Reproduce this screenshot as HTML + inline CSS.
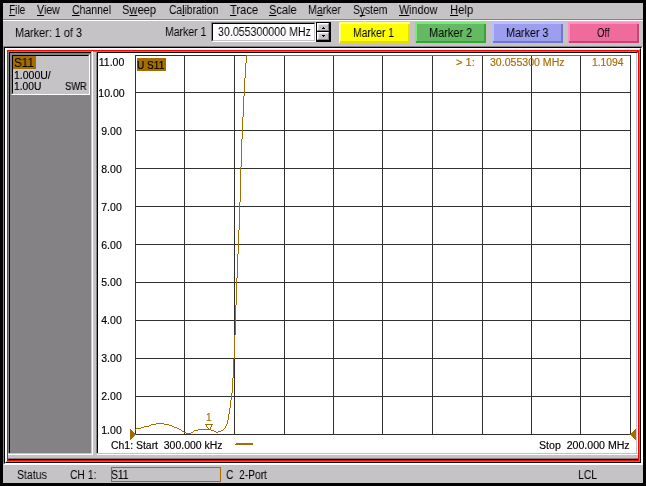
<!DOCTYPE html>
<html><head><meta charset="utf-8"><title>Network Analyzer</title>
<style>
html,body{margin:0;padding:0;background:#000;}
body{width:646px;height:486px;position:relative;overflow:hidden;font-family:"Liberation Sans",sans-serif;font-size:12.5px;color:#000;}
div,span{box-sizing:border-box;}
.a{position:absolute;}
.t{position:absolute;white-space:nowrap;line-height:13px;height:13px;transform-origin:0 0;will-change:transform;}
.ms{font-size:12.5px;}
.pl{font-size:10px;-webkit-text-stroke:0.15px;}
u{text-decoration:underline;text-decoration-thickness:1px;text-underline-offset:1px;text-decoration-skip-ink:none;}
.g{color:#a56d00;}
.yl{left:97.5px;width:27px;text-align:center;font-size:10px;-webkit-text-stroke:0.15px;transform:scaleX(1.05);transform-origin:50% 0;}
.btn{position:absolute;top:22px;width:71px;height:21px;}
svg{position:absolute;left:0;top:0;}
</style></head><body>
<div class="a" style="left:3px;top:3px;width:640px;height:480px;background:#c6c3c6"></div>
<!-- menu -->
<div class="t ms" style="left:9.05px;top:4px;transform:scaleX(0.8053)"><u>F</u>ile</div>
<div class="t ms" style="left:37.40px;top:4px;transform:scaleX(0.8519)"><u>V</u>iew</div>
<div class="t ms" style="left:72.20px;top:4px;transform:scaleX(0.8391)"><u>C</u>hannel</div>
<div class="t ms" style="left:122.40px;top:4px;transform:scaleX(0.8919)">S<u>w</u>eep</div>
<div class="t ms" style="left:168.95px;top:4px;transform:scaleX(0.8254)">Ca<u>l</u>ibration</div>
<div class="t ms" style="left:229.55px;top:4px;transform:scaleX(0.8935)"><u>T</u>race</div>
<div class="t ms" style="left:269.10px;top:4px;transform:scaleX(0.8867)"><u>S</u>cale</div>
<div class="t ms" style="left:308.15px;top:4px;transform:scaleX(0.8447)">M<u>a</u>rker</div>
<div class="t ms" style="left:353.40px;top:4px;transform:scaleX(0.8250)">S<u>y</u>stem</div>
<div class="t ms" style="left:399.35px;top:4px;transform:scaleX(0.8644)"><u>W</u>indow</div>
<div class="t ms" style="left:449.65px;top:4px;transform:scaleX(0.9009)"><u>H</u>elp</div>
<div class="a" style="left:3px;top:19px;width:640px;height:1px;background:#848284"></div>
<div class="a" style="left:3px;top:20px;width:640px;height:1px;background:#fff"></div>
<!-- toolbar -->
<div class="t ms" style="left:14.60px;top:27px;transform:scaleX(0.8684)">Marker: 1 of 3</div>
<div class="t ms" style="left:164.55px;top:26px;transform:scaleX(0.8396)">Marker 1</div>
<div class="a" style="left:211px;top:22px;width:105px;height:20px;background:#fff;border:1px solid;border-color:#848284 #fff #fff #848284"></div>
<div class="a" style="left:212px;top:23px;width:103px;height:18px;border:1px solid;border-color:#000 #c6c3c6 #c6c3c6 #000"></div>
<div class="t ms" style="left:217.95px;top:26px;transform:scaleX(0.8523)">30.055300000 MHz</div>
<div class="a" style="left:316px;top:22px;width:15px;height:20px;background:#000"></div>
<div class="a" style="left:317px;top:23px;width:12px;height:8px;background:#c6c3c6;border:1px solid;border-color:#fff #848284 #848284 #fff"></div><div class="a" style="left:318px;top:24px;width:10px;height:6px;border:1px solid;border-color:#e3e3e3 #c6c3c6 #c6c3c6 #e3e3e3"></div>
<div class="a" style="left:317px;top:32px;width:12px;height:8px;background:#c6c3c6;border:1px solid;border-color:#fff #848284 #848284 #fff"></div><div class="a" style="left:318px;top:33px;width:10px;height:6px;border:1px solid;border-color:#e3e3e3 #c6c3c6 #c6c3c6 #e3e3e3"></div>
<div class="a" style="left:323px;top:27px;width:1px;height:1px;background:#000"></div>
<div class="a" style="left:322px;top:28px;width:3px;height:1px;background:#000"></div>
<div class="a" style="left:322px;top:35px;width:3px;height:1px;background:#000"></div>
<div class="a" style="left:323px;top:36px;width:1px;height:1px;background:#000"></div>
<div class="btn" style="left:339px;background:#ffff84"><div class="a" style="left:2px;top:2px;width:67px;height:17px;background:#ffff00"></div><div class="a" style="left:69px;top:2px;width:2px;height:19px;background:#e7db00"></div><div class="a" style="left:1px;top:19px;width:70px;height:2px;background:#e7db00"></div></div><div class="t ms" style="left:353.40px;top:27px;transform:scaleX(0.8333)">Marker 1</div>
<div class="btn" style="left:415px;background:#7be77b"><div class="a" style="left:2px;top:2px;width:67px;height:17px;background:#63ba63"></div><div class="a" style="left:69px;top:2px;width:2px;height:19px;background:#39a239"></div><div class="a" style="left:1px;top:19px;width:70px;height:2px;background:#39a239"></div></div><div class="t ms" style="left:428.65px;top:27px;transform:scaleX(0.8771)">Marker 2</div>
<div class="btn" style="left:492px;background:#bdbeff"><div class="a" style="left:2px;top:2px;width:67px;height:17px;background:#9c9eef"></div><div class="a" style="left:69px;top:2px;width:2px;height:19px;background:#7375c6"></div><div class="a" style="left:1px;top:19px;width:70px;height:2px;background:#7375c6"></div></div><div class="t ms" style="left:506.00px;top:27px;transform:scaleX(0.8625)">Marker 3</div>
<div class="btn" style="left:568px;background:#ff8ec6"><div class="a" style="left:2px;top:2px;width:67px;height:17px;background:#ef6b9c"></div><div class="a" style="left:69px;top:2px;width:2px;height:19px;background:#c64573"></div><div class="a" style="left:1px;top:19px;width:70px;height:2px;background:#c64573"></div></div><div class="t ms" style="left:597.00px;top:27px;transform:scaleX(0.7647)">Off</div>
<!-- frame -->
<div class="a" style="left:3px;top:46px;width:640px;height:419px;background:#fff;border:1px solid;border-color:#848284 #fff #fff #848284"></div>
<div class="a" style="left:4px;top:47px;width:638px;height:417px;background:#fff;border:1px solid;border-color:#000 #fff #fff #000"></div>
<div class="a" style="left:5px;top:48px;width:636px;height:415px;background:#000;border:1px solid;border-color:#fff #000 #000 #fff"></div>
<div class="a" style="left:6px;top:49px;width:634px;height:413px;background:#000;border:1px solid;border-color:#fff #848284 #848284 #fff"></div>
<div class="a" style="left:7px;top:50px;width:632px;height:411px;background:#000;border:1px solid #f00"></div>
<div class="a" style="left:8px;top:51px;width:630px;height:409px;background:#000;border:1px solid;border-color:#848284 #000 #000 #848284"></div>
<!-- left panel -->
<div class="a" style="left:10px;top:53px;width:81px;height:400px;background:#848284"></div>
<div class="a" style="left:8px;top:453px;width:630px;height:1px;background:#c6c3c6"></div>
<div class="a" style="left:8px;top:454px;width:630px;height:1px;background:#fff"></div>
<div class="a" style="left:8px;top:455px;width:630px;height:3px;background:#c6c3c6"></div>
<div class="a" style="left:8px;top:458px;width:630px;height:1px;background:#848284"></div>
<div class="a" style="left:91px;top:52px;width:1px;height:402px;background:#c6c3c6"></div>
<div class="a" style="left:92px;top:51px;width:1px;height:404px;background:#fff"></div>
<div class="a" style="left:93px;top:52px;width:3px;height:406px;background:#c6c3c6"></div>
<div class="a" style="left:96px;top:52px;width:1px;height:401px;background:#848284"></div>
<div class="a" style="left:96px;top:453px;width:1px;height:5px;background:#c6c3c6"></div>
<div class="a" style="left:11px;top:54px;width:79px;height:41px;background:#c6c3c6;border:1px solid;border-color:#848284 #fff #fff #848284"></div>
<div class="a" style="left:12px;top:55px;width:77px;height:39px;border:1px solid;border-color:#000 #c6c3c6 #c6c3c6 #000"></div>
<div class="a" style="left:13px;top:56px;width:23px;height:13px;background:#a56d00"></div>
<div class="t ms" style="left:13.62px;top:57px;transform:scaleX(0.9375)">S11</div>
<div class="t pl" style="left:14.05px;top:69px;transform:scaleX(1.0474)">1.000U/</div>
<div class="t pl" style="left:14.05px;top:80px;transform:scaleX(1.0247)">1.00U</div>
<div class="t pl" style="left:65.20px;top:80px;transform:scaleX(0.9304)">SWR</div>
<!-- plot panel -->
<div class="a" style="left:97px;top:52px;width:541px;height:401px;background:#fff;border:1px solid;border-color:#000 #fff #fff #000;border-bottom:none"></div>
<div class="a" style="left:636px;top:53px;width:1px;height:400px;background:#c6c3c6"></div>
<svg width="646" height="486" viewBox="0 0 646 486" shape-rendering="crispEdges">
<g fill="#313031"><rect x="135" y="55" width="1" height="380"/><rect x="184" y="55" width="1" height="380"/><rect x="234" y="55" width="1" height="380"/><rect x="284" y="55" width="1" height="380"/><rect x="333" y="55" width="1" height="380"/><rect x="382" y="55" width="1" height="380"/><rect x="432" y="55" width="1" height="380"/><rect x="482" y="55" width="1" height="380"/><rect x="531" y="55" width="1" height="380"/><rect x="580" y="55" width="1" height="380"/><rect x="630" y="55" width="1" height="380"/><rect x="135" y="55" width="496" height="1"/><rect x="135" y="92" width="496" height="1"/><rect x="135" y="130" width="496" height="1"/><rect x="135" y="168" width="496" height="1"/><rect x="135" y="206" width="496" height="1"/><rect x="135" y="244" width="496" height="1"/><rect x="135" y="282" width="496" height="1"/><rect x="135" y="320" width="496" height="1"/><rect x="135" y="358" width="496" height="1"/><rect x="135" y="396" width="496" height="1"/><rect x="135" y="434" width="496" height="1"/></g>
<g fill="#a56d00"><rect x="135" y="429" width="1" height="1"/><rect x="136" y="428" width="5" height="1"/><rect x="141" y="427" width="3" height="1"/><rect x="144" y="426" width="5" height="1"/><rect x="149" y="425" width="2" height="1"/><rect x="151" y="424" width="5" height="1"/><rect x="156" y="423" width="8" height="1"/><rect x="164" y="424" width="5" height="1"/><rect x="169" y="425" width="3" height="1"/><rect x="172" y="426" width="2" height="1"/><rect x="174" y="427" width="3" height="1"/><rect x="177" y="428" width="2" height="1"/><rect x="179" y="429" width="2" height="1"/><rect x="181" y="430" width="1" height="1"/><rect x="182" y="431" width="2" height="1"/><rect x="184" y="432" width="2" height="1"/><rect x="186" y="433" width="5" height="1"/><rect x="191" y="432" width="2" height="1"/><rect x="193" y="431" width="1" height="1"/><rect x="194" y="430" width="4" height="1"/><rect x="198" y="429" width="13" height="1"/><rect x="211" y="430" width="3" height="1"/><rect x="214" y="431" width="2" height="1"/><rect x="216" y="432" width="2" height="1"/><rect x="218" y="431" width="3" height="1"/><rect x="221" y="430" width="2" height="1"/><rect x="223" y="429" width="1" height="1"/><rect x="224" y="428" width="1" height="1"/><rect x="225" y="426" width="1" height="2"/><rect x="226" y="424" width="1" height="2"/><rect x="227" y="420" width="1" height="4"/><rect x="228" y="414" width="1" height="6"/><rect x="229" y="408" width="1" height="6"/><rect x="230" y="400" width="1" height="8"/><rect x="231" y="393" width="1" height="7"/><rect x="232" y="378" width="1" height="15"/><rect x="233" y="359" width="1" height="19"/><rect x="234" y="335" width="1" height="24"/><rect x="235" y="305" width="1" height="30"/><rect x="236" y="278" width="1" height="27"/><rect x="237" y="254" width="1" height="24"/><rect x="238" y="230" width="1" height="24"/><rect x="239" y="202" width="1" height="28"/><rect x="240" y="167" width="1" height="35"/><rect x="241" y="139" width="1" height="28"/><rect x="242" y="117" width="1" height="22"/><rect x="243" y="96" width="1" height="21"/><rect x="244" y="78" width="1" height="18"/><rect x="245" y="63" width="1" height="15"/><rect x="246" y="56" width="1" height="7"/><rect x="246" y="55" width="384" height="1"/>
<rect x="630" y="434" width="1" height="1"/><rect x="135" y="434" width="1" height="1"/><rect x="631" y="433" width="1" height="3"/><rect x="134" y="433" width="1" height="3"/><rect x="632" y="432" width="1" height="5"/><rect x="133" y="432" width="1" height="5"/><rect x="633" y="431" width="1" height="7"/><rect x="132" y="431" width="1" height="7"/><rect x="634" y="430" width="1" height="9"/><rect x="131" y="430" width="1" height="9"/><rect x="635" y="429" width="1" height="11"/><rect x="130" y="429" width="1" height="11"/>
<rect x="236" y="443" width="17" height="1"/><rect x="235" y="444" width="18" height="1"/>
<rect x="205" y="424" width="8" height="1"/><rect x="206" y="425" width="1" height="2"/><rect x="211" y="425" width="1" height="2"/><rect x="207" y="427" width="1" height="1"/><rect x="210" y="427" width="1" height="2"/><rect x="208" y="428" width="1" height="1"/>
</g>
</svg>
<div class="t yl" style="top:56px">11.00</div><div class="t yl" style="top:87px">10.00</div><div class="t yl" style="top:125px">9.00</div><div class="t yl" style="top:163px">8.00</div><div class="t yl" style="top:201px">7.00</div><div class="t yl" style="top:239px">6.00</div><div class="t yl" style="top:276px">5.00</div><div class="t yl" style="top:314px">4.00</div><div class="t yl" style="top:352px">3.00</div><div class="t yl" style="top:390px">2.00</div><div class="t yl" style="top:424px">1.00</div>
<div class="a" style="left:137px;top:58px;width:29px;height:13px;background:#a56d00"></div>
<div class="t pl" style="left:137.10px;top:59px;transform:scaleX(1.0077)">U S11</div>
<div class="t pl g" style="left:456.35px;top:56px;transform:scaleX(1.1062)">&gt; 1:</div>
<div class="t pl g" style="left:489.85px;top:56px;transform:scaleX(1.0557)">30.055300 MHz</div>
<div class="t pl g" style="left:591.95px;top:56px;transform:scaleX(1.0300)">1.1094</div>
<div class="t pl g" style="left:205.65px;top:411px;transform:scaleX(1.0000)">1</div>
<div class="t pl" style="left:110.55px;top:439px;transform:scaleX(1.0443)">Ch1: Start&nbsp; 300.000 kHz</div>
<div class="t pl" style="left:538.60px;top:439px;transform:scaleX(1.0588)">Stop&nbsp; 200.000 MHz</div>
<!-- status bar -->
<div class="t ms" style="left:17.05px;top:469px;transform:scaleX(0.8417)">Status</div>
<div class="t ms" style="left:69.80px;top:469px;transform:scaleX(0.8258)">CH 1:</div>
<div class="a" style="left:111px;top:467px;width:110px;height:15px;border:1px solid #a56d00"></div>
<div class="t ms" style="left:111.25px;top:469px;transform:scaleX(0.8250)">S11</div>
<div class="t ms" style="left:225.55px;top:469px;transform:scaleX(0.8180)">C&nbsp; 2-Port</div>
<div class="t ms" style="left:577.85px;top:469px;transform:scaleX(0.8318)">LCL</div>
</body></html>
